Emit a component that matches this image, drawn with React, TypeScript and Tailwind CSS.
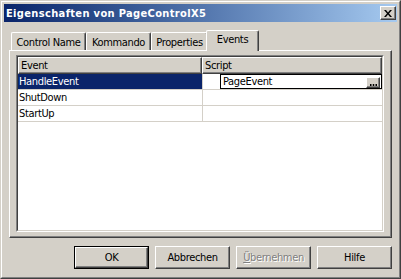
import React from "react";

const raised =
  "border border-t-white border-l-white border-r-[#404040] border-b-[#404040] shadow-[inset_-1px_-1px_0_#808080]";

function Tab({ label, w, selected }: { label: string; w: number; selected?: boolean }) {
  if (selected) {
    return (
      <div
        className="relative z-10 -mx-[2px] h-[21px] -mb-[1px] bg-[#D4D0C8] border-t border-l border-t-white border-l-white border-r border-r-[#404040] shadow-[inset_-1px_0_0_#808080] rounded-t-[2px] flex items-start justify-center pt-[3px]"
        style={{ width: w + 4 }}
      >
        {label}
      </div>
    );
  }
  return (
    <div
      className="mt-[2px] h-[18px] bg-[#D4D0C8] border-t border-l border-t-white border-l-white border-r border-r-[#404040] shadow-[inset_-1px_0_0_#808080] rounded-t-[2px] flex items-center justify-center pt-[1px]"
      style={{ width: w }}
    >
      {label}
    </div>
  );
}

function Btn({ label, def, disabled }: { label: React.ReactNode; def?: boolean; disabled?: boolean }) {
  if (def) {
    return (
      <div className="w-[75px] h-[23px] border border-black">
        <div className={`w-full h-full ${raised} flex items-center justify-center`}>{label}</div>
      </div>
    );
  }
  return (
    <div
      className={`w-[75px] h-[23px] ${raised} flex items-center justify-center ${
        disabled ? "text-[#808080] [text-shadow:1px_1px_0_#ffffff]" : ""
      }`}
    >
      {label}
    </div>
  );
}

export default function App() {
  return (
    <div
      className="w-[401px] h-[279px] bg-[#D4D0C8] border border-t-[#D4D0C8] border-l-[#D4D0C8] border-r-[#404040] border-b-[#404040] flex flex-col text-[11px] tracking-[-0.35px] text-black leading-none"
      style={{ fontFamily: '"DejaVu Sans Condensed", "Liberation Sans", Arial, sans-serif' }}
    >
      <div className="flex-1 flex flex-col border border-t-white border-l-white border-r-[#808080] border-b-[#808080] p-[2px]">
        {/* Title bar */}
        <div className="h-[18px] flex items-center justify-between bg-gradient-to-r from-[#0A246A] to-[#A6CAF0]">
          <span className="pl-[2px] text-white font-bold tracking-[0.35px]">Eigenschaften von PageControlX5</span>
          <div className={`w-[16px] h-[14px] mr-[1px] bg-[#D4D0C8] ${raised} flex items-center justify-center`}>
            <svg width="8" height="7" viewBox="0 0 8 7">
              <path d="M0 0h2l2 2.5L6 0h2L5 3.5 8 7H6L4 4.5 2 7H0l3-3.5z" fill="#000" />
            </svg>
          </div>
        </div>

        {/* Tabs */}
        <div className="mt-[8px] mx-[5px] flex flex-col">
          <div className="flex pl-[2px] items-end">
            <Tab label="Control Name" w={75} />
            <Tab label="Kommando" w={65} />
            <Tab label="Properties" w={57} />
            <Tab label="Events" w={49} selected />
          </div>
          {/* Panel */}
          <div className="h-[188px] border border-t-white border-l-white border-r-[#404040] border-b-[#404040] shadow-[inset_-1px_-1px_0_#808080] pl-[6px] pt-[4px] pr-[7px] pb-[5px] flex">
            {/* Grid */}
            <div className="flex-1 border border-t-[#808080] border-l-[#808080] border-r-white border-b-white">
              <div className="w-full h-full border border-t-[#404040] border-l-[#404040] border-r-[#D4D0C8] border-b-[#D4D0C8] bg-white flex flex-col">
                <div className="flex h-[17px]">
                  <div className={`w-[184px] h-full bg-[#D4D0C8] ${raised} flex items-center pl-[2px]`}>Event</div>
                  <div className={`flex-1 h-full bg-[#D4D0C8] ${raised} flex items-center pl-[2px]`}>Script</div>
                </div>
                <div className="flex h-[16px] border-b border-b-[#D4D0C8]">
                  <div className="w-[184px] bg-[#0A246A] text-white flex items-center pl-[1px]">HandleEvent</div>
                  <div className="flex-1 border-l border-l-[#D4D0C8] pl-[17px]">
                    <div className="h-full border border-black flex items-center justify-between pl-[2px]">
                      <span>PageEvent</span>
                      <div className={`w-[14px] h-[11px] mt-[2px] mr-[1px] bg-[#D4D0C8] ${raised} flex items-end justify-center pb-[1px]`}>
                        <svg width="7" height="2" viewBox="0 0 7 2">
                          <rect x="0" y="0" width="1.5" height="2" fill="#000" />
                          <rect x="2.75" y="0" width="1.5" height="2" fill="#000" />
                          <rect x="5.5" y="0" width="1.5" height="2" fill="#000" />
                        </svg>
                      </div>
                    </div>
                  </div>
                </div>
                {["ShutDown", "StartUp"].map((n) => (
                  <div key={n} className="flex h-[16px] border-b border-b-[#D4D0C8]">
                    <div className="w-[184px] flex items-center pl-[1px]">{n}</div>
                    <div className="flex-1 border-l border-l-[#D4D0C8]" />
                  </div>
                ))}
              </div>
            </div>
          </div>
        </div>

        {/* Buttons */}
        <div className="mt-[8px] mr-[5px] flex justify-end gap-[6px]">
          <Btn label="OK" def />
          <Btn label="Abbrechen" />
          <Btn
            label={
              <span>
                <span className="underline">Ü</span>bernehmen
              </span>
            }
            disabled
          />
          <Btn label="Hilfe" />
        </div>
      </div>
    </div>
  );
}
